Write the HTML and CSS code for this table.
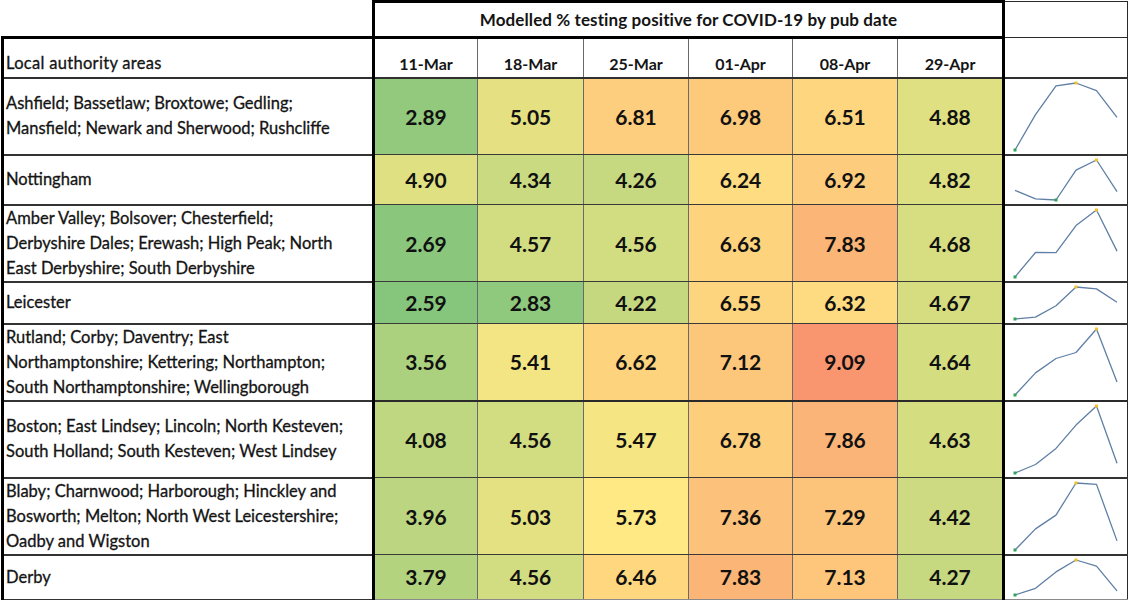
FILE: index.html
```html
<!DOCTYPE html>
<html lang="en">
<head>
<meta charset="utf-8">
<title>Modelled % testing positive for COVID-19</title>
<link rel="stylesheet" href="styles.css">
</head>
<body>
<table class="sheet">
  <colgroup>
    <col class="c-area">
    <col class="c-d1">
    <col class="c-d2">
    <col class="c-d3">
    <col class="c-d4">
    <col class="c-d5">
    <col class="c-d6">
    <col class="c-spark">
  </colgroup>
  <thead>
    <tr class="r-title">
      <th class="blank"></th>
      <th class="title" colspan="6">Modelled % testing positive for COVID-19 by pub date</th>
      <th class="spark-top"></th>
    </tr>
    <tr class="r-head">
      <th class="area-head">Local authority areas</th>
      <th class="date">11-Mar</th>
      <th class="date">18-Mar</th>
      <th class="date">25-Mar</th>
      <th class="date">01-Apr</th>
      <th class="date">08-Apr</th>
      <th class="date">29-Apr</th>
      <th class="spark-head"></th>
    </tr>
  </thead>
  <tbody>
    <tr class="h77">
      <td class="area">Ashfield; Bassetlaw; Broxtowe; Gedling;<br>Mansfield; Newark and Sherwood; Rushcliffe</td>
      <td class="val" style="background:rgb(146,201,125)">2.89</td>
      <td class="val" style="background:rgb(229,225,130)">5.05</td>
      <td class="val" style="background:rgb(253,206,125)">6.81</td>
      <td class="val" style="background:rgb(253,202,124)">6.98</td>
      <td class="val" style="background:rgb(254,214,127)">6.51</td>
      <td class="val" style="background:rgb(222,224,130)">4.88</td>
      <td class="spark"><svg width="122" height="75" viewBox="0 0 122 75"><polyline class="line" points="10,71 30.5,35.6 51,6.8 71,4 91.5,11.7 112,38.4"/><rect class="lo" x="8.5" y="69.5" width="3" height="3"/><rect class="hi" x="69.5" y="2.5" width="3" height="3"/></svg></td>
    </tr>
    <tr class="h50">
      <td class="area">Nottingham</td>
      <td class="val" style="background:rgb(223,224,130)">4.90</td>
      <td class="val" style="background:rgb(201,218,128)">4.34</td>
      <td class="val" style="background:rgb(198,217,128)">4.26</td>
      <td class="val" style="background:rgb(254,220,129)">6.24</td>
      <td class="val" style="background:rgb(253,204,125)">6.92</td>
      <td class="val" style="background:rgb(220,223,130)">4.82</td>
      <td class="spark"><svg width="122" height="48" viewBox="0 0 122 48"><polyline class="line" points="10,34.4 30.5,42.8 51,44 71,14.2 91.5,4 112,35.6"/><rect class="lo" x="49.5" y="42.5" width="3" height="3"/><rect class="hi" x="90" y="2.5" width="3" height="3"/></svg></td>
    </tr>
    <tr class="h77">
      <td class="area">Amber Valley; Bolsover; Chesterfield;<br>Derbyshire Dales; Erewash; High Peak; North<br>East Derbyshire; South Derbyshire</td>
      <td class="val" style="background:rgb(138,199,124)">2.69</td>
      <td class="val" style="background:rgb(210,220,129)">4.57</td>
      <td class="val" style="background:rgb(210,220,129)">4.56</td>
      <td class="val" style="background:rgb(253,211,126)">6.63</td>
      <td class="val" style="background:rgb(251,181,119)">7.83</td>
      <td class="val" style="background:rgb(215,221,129)">4.68</td>
      <td class="spark"><svg width="122" height="75" viewBox="0 0 122 75"><polyline class="line" points="10,71 30.5,46.5 51,46.6 71,19.6 91.5,4 112,45.1"/><rect class="lo" x="8.5" y="69.5" width="3" height="3"/><rect class="hi" x="90" y="2.5" width="3" height="3"/></svg></td>
    </tr>
    <tr class="h42">
      <td class="area">Leicester</td>
      <td class="val" style="background:rgb(134,198,124)">2.59</td>
      <td class="val" style="background:rgb(143,201,125)">2.83</td>
      <td class="val" style="background:rgb(197,216,128)">4.22</td>
      <td class="val" style="background:rgb(254,213,127)">6.55</td>
      <td class="val" style="background:rgb(254,218,128)">6.32</td>
      <td class="val" style="background:rgb(214,221,129)">4.67</td>
      <td class="spark"><svg width="122" height="40" viewBox="0 0 122 40"><polyline class="line" points="10,36 30.5,34.1 51,22.8 71,4 91.5,5.9 112,19.2"/><rect class="lo" x="8.5" y="34.5" width="3" height="3"/><rect class="hi" x="69.5" y="2.5" width="3" height="3"/></svg></td>
    </tr>
    <tr class="h76 thick-bottom">
      <td class="area">Rutland; Corby; Daventry; East<br>Northamptonshire; Kettering; Northampton;<br>South Northamptonshire; Wellingborough</td>
      <td class="val" style="background:rgb(171,209,126)">3.56</td>
      <td class="val" style="background:rgb(243,229,131)">5.41</td>
      <td class="val" style="background:rgb(253,211,126)">6.62</td>
      <td class="val" style="background:rgb(253,199,123)">7.12</td>
      <td class="val" style="background:rgb(249,150,111)">9.09</td>
      <td class="val" style="background:rgb(213,221,129)">4.64</td>
      <td class="spark"><svg width="122" height="74" viewBox="0 0 122 74"><polyline class="line" points="10,70 30.5,47.9 51,33.5 71,27.5 91.5,4 112,57.1"/><rect class="lo" x="8.5" y="68.5" width="3" height="3"/><rect class="hi" x="90" y="2.5" width="3" height="3"/></svg></td>
    </tr>
    <tr class="h77">
      <td class="area">Boston; East Lindsey; Lincoln; North Kesteven;<br>South Holland; South Kesteven; West Lindsey</td>
      <td class="val" style="background:rgb(191,215,128)">4.08</td>
      <td class="val" style="background:rgb(210,220,129)">4.56</td>
      <td class="val" style="background:rgb(245,230,131)">5.47</td>
      <td class="val" style="background:rgb(253,207,125)">6.78</td>
      <td class="val" style="background:rgb(251,180,119)">7.86</td>
      <td class="val" style="background:rgb(213,221,129)">4.63</td>
      <td class="spark"><svg width="122" height="75" viewBox="0 0 122 75"><polyline class="line" points="10,71 30.5,62.5 51,46.4 71,23.1 91.5,4 112,61.3"/><rect class="lo" x="8.5" y="69.5" width="3" height="3"/><rect class="hi" x="90" y="2.5" width="3" height="3"/></svg></td>
    </tr>
    <tr class="h77">
      <td class="area">Blaby; Charnwood; Harborough; Hinckley and<br>Bosworth; Melton; North West Leicestershire;<br>Oadby and Wigston</td>
      <td class="val" style="background:rgb(187,213,128)">3.96</td>
      <td class="val" style="background:rgb(228,225,130)">5.03</td>
      <td class="val" style="background:rgb(255,233,132)">5.73</td>
      <td class="val" style="background:rgb(252,193,122)">7.36</td>
      <td class="val" style="background:rgb(252,195,122)">7.29</td>
      <td class="val" style="background:rgb(205,218,129)">4.42</td>
      <td class="spark"><svg width="122" height="75" viewBox="0 0 122 75"><polyline class="line" points="10,71 30.5,49.9 51,36.1 71,4 91.5,5.4 112,61.9"/><rect class="lo" x="8.5" y="69.5" width="3" height="3"/><rect class="hi" x="69.5" y="2.5" width="3" height="3"/></svg></td>
    </tr>
    <tr class="h45 last">
      <td class="area">Derby</td>
      <td class="val" style="background:rgb(180,211,127)">3.79</td>
      <td class="val" style="background:rgb(210,220,129)">4.56</td>
      <td class="val" style="background:rgb(254,215,127)">6.46</td>
      <td class="val" style="background:rgb(251,181,119)">7.83</td>
      <td class="val" style="background:rgb(253,198,123)">7.13</td>
      <td class="val" style="background:rgb(199,217,128)">4.27</td>
      <td class="spark"><svg width="122" height="43" viewBox="0 0 122 43"><polyline class="line" points="10,39 30.5,32.3 51,15.9 71,4 91.5,10.1 112,34.8"/><rect class="lo" x="8.5" y="37.5" width="3" height="3"/><rect class="hi" x="69.5" y="2.5" width="3" height="3"/></svg></td>
    </tr>
  </tbody>
</table>
</body>
</html>
```

FILE: styles.css
```css
html, body {
  margin: 0;
  padding: 0;
  background: #ffffff;
}

body {
  font-family: Lato, "Liberation Sans", sans-serif;
  color: #141414;
}

.sheet {
  border-collapse: collapse;
  table-layout: fixed;
  width: 1125px;
  margin: 0 0 0 1px;
}

.c-area { width: 371px; }
.c-d1 { width: 104px; }
.c-d2 { width: 106px; }
.c-d3 { width: 105px; }
.c-d4 { width: 104px; }
.c-d5 { width: 105px; }
.c-d6 { width: 106px; }
.c-spark { width: 124px; }

.sheet th,
.sheet td {
  padding: 0;
  overflow: hidden;
}

/* title row */
.r-title { height: 36px; }

.blank {
  border: none;
}

.title {
  border: 3px solid #000;
  font-size: 17px;
  font-weight: 700;
  text-align: center;
  vertical-align: middle;
  padding-top: 5px;
  letter-spacing: 0.1px;
}

.spark-top {
  border: 1px solid #2a2a2a;
}

/* header row */
.r-head { height: 40px; }

.r-head th {
  vertical-align: bottom;
  padding-bottom: 4px;
  font-size: 16px;
  font-weight: 700;
  border-bottom: 2px solid #303030;
}

.sheet .area-head {
  text-align: left;
  padding-left: 2px;
  font-size: 16.5px;
  font-weight: 400;
  letter-spacing: 0.3px;
  -webkit-text-stroke: 0.3px #141414;
  border-top: 3px solid #000;
  border-left: 3px solid #000;
  border-right: 3px solid #000;
}

.date {
  text-align: center;
  border-left: 1px solid #6a6a6a;
  border-right: 1px solid #6a6a6a;
}

.spark-head {
  border-left: 3px solid #000;
  border-right: 1px solid #2a2a2a;
}

/* body rows */
.h77 { height: 77px; }
.h76 { height: 76px; }
.h50 { height: 50px; }
.h42 { height: 42px; }
.h45 { height: 45px; }

.sheet .area {
  font-size: 16.5px;
  line-height: 25px;
  white-space: nowrap;
  padding: 0 2px;
  vertical-align: middle;
  -webkit-text-stroke: 0.3px #141414;
  border-left: 3px solid #000;
  border-right: 3px solid #000;
  border-bottom: 2px solid #333;
}

.val {
  text-align: center;
  vertical-align: middle;
  font-size: 21px;
  font-weight: 700;
  color: #111;
  border-left: 1px solid #6a6a6a;
  border-right: 1px solid #6a6a6a;
  border-bottom: 1px solid #3a3a3a;
}

.spark {
  vertical-align: top;
  border-left: 3px solid #000;
  border-right: 1px solid #2a2a2a;
  border-bottom: 2px solid #333;
}

.spark svg {
  display: block;
}

.thick-bottom td {
  border-bottom: 2px solid #2a2a2a;
}

.last td {
  border-bottom: 2px solid #8a8a8a;
}

.line {
  fill: none;
  stroke: #5f7fa5;
  stroke-width: 1.3;
  stroke-linejoin: round;
}

.lo { fill: #2fa45a; }
.hi { fill: #f3c12a; }
```
